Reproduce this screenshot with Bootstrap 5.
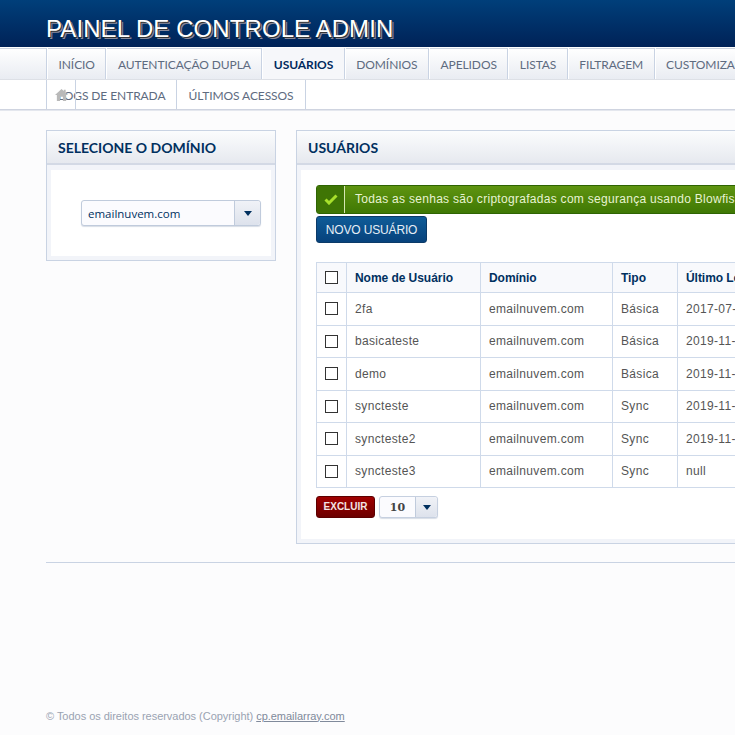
<!doctype html>
<html lang="pt">
<head>
<meta charset="utf-8">
<link rel="stylesheet" href="https://cdn.jsdelivr.net/npm/bootstrap@5.3.0/dist/css/bootstrap.min.css">
<style>
html,body{height:735px;overflow:hidden}
body{background:#fcfcfd;font-family:"Liberation Sans",Arial,sans-serif;font-size:12px;color:#555;width:735px;display:flex;flex-direction:column}
.top-band{height:47px;background:linear-gradient(#003f7a,#002257);padding-left:46px;flex:none}
.top-band h1{margin:0;font:400 24px/1 "Liberation Sans",Arial,sans-serif;letter-spacing:.08px;color:#fff;padding-top:17px;text-shadow:1px 1px 0 #333,2px 2px 0 #8a8a9a;white-space:nowrap}
.nav-strip{flex:none;border-top:1px solid #fff;background:linear-gradient(#fff,#e9ecf2);height:33px;border-bottom:1px solid #dde0e6;box-shadow:inset 0 1px 0 #cdd4e0;padding-left:46px;white-space:nowrap;overflow:hidden}
.nav-strip-tabs{display:flex;height:100%;border-left:1px solid #c9d3e3}
.tab-a{font:400 12px/33px Lato,sans-serif;letter-spacing:-.08px;color:#5e6b80;padding:0 10.5px;border-right:1px solid #c9d3e3;border-left:1px solid #fff;height:31px;flex:none;text-decoration:none}
.tab-a.on{background:#f6f7fa;color:#002a5e;font-weight:700}
.sub-strip{flex:none;background:#fff;height:30px;border-bottom:1px solid #cfd4e0;box-shadow:0 1px 0 #e4e7ee;padding-left:46px;position:relative}
.sub-tabs{display:flex;height:29px;border-left:1px solid #c9d3e3}
.sub-a{font:400 12px/31px Lato,sans-serif;letter-spacing:-.08px;color:#5e6b80;padding:0 11px;border-right:1px solid #c9d3e3;text-decoration:none}
.home-ico{position:absolute;left:47px;top:0;width:29px;height:29px;border-right:1px solid #c9d3e3;display:flex;align-items:center;justify-content:flex-start;padding-left:8px}
.page-body{flex:1;padding:20px 0 0 46px;display:flex;flex-direction:column;min-height:0;overflow:hidden}
.cols{display:flex;gap:20px;align-items:flex-start;width:1000px}
.box{border:1px solid #c9d3e3;background:#f2f4f9}
.box-left{width:230px;flex:none}
.box-main{flex:none;width:684px}
.box-head{height:34px;background:linear-gradient(#fbfcfd,#e6e9ef);border-bottom:2px solid #d3d9e5;font:700 14px/33px Lato,sans-serif;color:#00305f;padding-left:11px}
.box-in{background:#fff;margin:5px 4px 4px}
.left-in{height:86px;padding:30px 0 0 30px}
.sel{display:flex;width:180px;height:26px;border:1px solid #c0cbdc;border-radius:3px;background:#fbfbfe;box-shadow:0 1px 1px #d8dde6;font:11.5px/26px "Open Sans",sans-serif;color:#00305f}
.sel span:first-child{flex:1;padding-left:6px}
.sel-btn{width:26px;flex:none;background:linear-gradient(#f0f2f7,#dde2ec);border-left:1px solid #c0cbdc;display:flex;align-items:center;justify-content:center;border-radius:0 3px 3px 0}
.tri{width:0;height:0;border:4px solid transparent;border-top:5px solid #00305f;border-bottom:0}
.main-in{padding:15px 0 21px 15px;margin-left:4px;margin-right:0}
.ok-bar{height:29px;width:660px;display:flex;align-items:stretch;border:1px solid #2e6402;border-radius:3px;background:linear-gradient(#5f9410,#3f7804);color:#e8f3d2;font-size:12px;letter-spacing:.29px;line-height:27px;white-space:nowrap;overflow:hidden}
.ok-ico{width:28px;flex:none;border-right:1px solid #d6e6b4;display:flex;align-items:center;justify-content:center;background:#3f7505}
.ok-text{padding-left:10px}
.new-btn{display:block;width:111px;height:27px;margin-top:2px;padding:0;border:1px solid #0b3a68;border-radius:3px;background:linear-gradient(#0f5c98,#07427c);color:#e6eef6;font:12px/26px "Liberation Sans",sans-serif;letter-spacing:-.15px;text-align:center}
.user-table{margin:19px 0 0;border-collapse:collapse;table-layout:fixed;width:600px;--bs-table-bg:transparent;font-size:12px}
.table.user-table>*>*>*{border:1px solid #cfdaea;padding:0 8px;vertical-align:middle;box-shadow:none;color:#555;white-space:nowrap;overflow:hidden;letter-spacing:.33px}
.table.user-table thead th{background:#f8f9fc;color:#00305f;font-weight:700;height:30px;letter-spacing:-.05px}
.table.user-table tbody td{height:32.5px}
.chk{display:block;width:13px;height:13px;border:1px solid #333;background:#fff;margin:0 auto}
.table.user-table>*>*>.cc{padding:0}
.after-row{display:flex;gap:4px;margin-top:8px}
.del-btn{width:59px;height:22px;padding:0;border:1px solid #5c0000;border-radius:3px;background:linear-gradient(#a00000,#6c0000);color:#f4e4e4;font:700 10px/20px "Liberation Sans",sans-serif;text-align:center}
.sel-sm{width:59px;height:22px;font:700 11px/22px "DejaVu Serif",serif;color:#444;border-color:#c6d0e0}
.sel-sm span:first-child{padding-left:0;text-align:center}
.sel-sm .sel-btn{width:22px}
.foot-rule{border-top:1px solid #c9d3e3;margin-top:18px;width:689px;flex:none}
.legal{margin-top:auto;padding-bottom:11px;font-size:11px;letter-spacing:-.03px;color:#9aa3b2}
.legal a{color:#808a9b}
</style>
</head>
<body>
<div class="top-band"><h1>PAINEL DE CONTROLE ADMIN</h1></div>
<nav class="nav-strip">
  <div class="nav-strip-tabs">
    <a class="tab-a" href="#">INÍCIO</a>
    <a class="tab-a" href="#">AUTENTICAÇÃO DUPLA</a>
    <a class="tab-a on" href="#">USUÁRIOS</a>
    <a class="tab-a" href="#">DOMÍNIOS</a>
    <a class="tab-a" href="#">APELIDOS</a>
    <a class="tab-a" href="#">LISTAS</a>
    <a class="tab-a" href="#">FILTRAGEM</a>
    <a class="tab-a" href="#">CUSTOMIZAÇÃO</a>
  </div>
</nav>
<div class="sub-strip">
  <div class="sub-tabs">
    <a class="sub-a" href="#">LOGS DE ENTRADA</a>
    <a class="sub-a" href="#">ÚLTIMOS ACESSOS</a>
  </div>
  <div class="home-ico"><svg width="13" height="14" viewBox="0 0 14 13"><path fill="#b9b9b9" d="M7 0 0 6.5h2V13h3.5V8.5h3V13H12V6.5h2L11.500 4V.8H9.500V2.200Z"/></svg></div>
</div>
<main class="page-body">
  <div class="cols">
    <section class="box box-left">
      <div class="box-head">SELECIONE O DOMÍNIO</div>
      <div class="box-in left-in"><div class="sel"><span>emailnuvem.com</span><span class="sel-btn"><i class="tri"></i></span></div></div>
    </section>
    <section class="box box-main">
      <div class="box-head">USUÁRIOS</div>
      <div class="box-in main-in">
        <div class="ok-bar"><span class="ok-ico"><svg width="14" height="11" viewBox="0 0 14 11"><path fill="none" stroke="#a8e02c" stroke-width="3" d="M1.500 5.500 5 9l7.500-7.500"/></svg></span><span class="ok-text">Todas as senhas são criptografadas com segurança usando Blowfish</span></div>
        <button class="new-btn" type="button">NOVO USUÁRIO</button>
        <table class="table user-table">
          <colgroup><col style="width:30px"><col style="width:134px"><col style="width:132px"><col style="width:65px"><col style="width:239px"></colgroup>
          <thead><tr><th class="cc"><i class="chk"></i></th><th>Nome de Usuário</th><th>Domínio</th><th>Tipo</th><th>Último Login</th></tr></thead>
          <tbody>
            <tr><td class="cc"><i class="chk"></i></td><td>2fa</td><td>emailnuvem.com</td><td>Básica</td><td>2017-07-</td></tr>
            <tr><td class="cc"><i class="chk"></i></td><td>basicateste</td><td>emailnuvem.com</td><td>Básica</td><td>2019-11-</td></tr>
            <tr><td class="cc"><i class="chk"></i></td><td>demo</td><td>emailnuvem.com</td><td>Básica</td><td>2019-11-</td></tr>
            <tr><td class="cc"><i class="chk"></i></td><td>syncteste</td><td>emailnuvem.com</td><td>Sync</td><td>2019-11-</td></tr>
            <tr><td class="cc"><i class="chk"></i></td><td>syncteste2</td><td>emailnuvem.com</td><td>Sync</td><td>2019-11-</td></tr>
            <tr><td class="cc"><i class="chk"></i></td><td>syncteste3</td><td>emailnuvem.com</td><td>Sync</td><td>null</td></tr>
          </tbody>
        </table>
        <div class="after-row"><button class="del-btn" type="button">EXCLUIR</button><div class="sel sel-sm"><span>10</span><span class="sel-btn"><i class="tri"></i></span></div></div>
      </div>
    </section>
  </div>
  <div class="foot-rule"></div>
  <p class="legal mb-0">© Todos os direitos reservados (Copyright) <a href="#">cp.emailarray.com</a></p>
</main>
<script src="https://cdn.jsdelivr.net/npm/bootstrap@5.3.0/dist/js/bootstrap.bundle.min.js"></script>
</body>
</html>
